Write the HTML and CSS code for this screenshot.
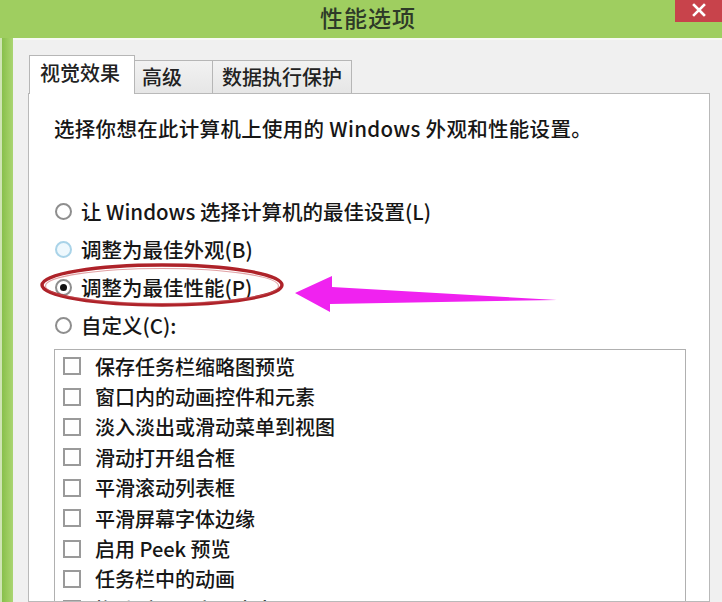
FILE: index.html
```html
<!DOCTYPE html>
<html lang="zh-CN">
<head>
<meta charset="utf-8">
<title>性能选项</title>
<link rel="stylesheet" href="styles.css">
</head>
<body>
<div class="window">
  <header class="titlebar">
    <div class="title">性能选项</div>
    <div class="close" aria-label="关闭">
      <svg width="14" height="14" viewBox="0 0 14 14"><path d="M2 2 L12 12 M12 2 L2 12" stroke="#fff" stroke-width="2.6" stroke-linecap="square"/></svg>
    </div>
  </header>
  <div class="frame">
    <div class="edge"></div>
    <div class="client">
      <div class="tabs">
        <div class="tab active">视觉效果</div>
        <div class="tab t2">高级</div>
        <div class="tab t3">数据执行保护</div>
      </div>
      <div class="panel">
        <p class="desc">选择你想在此计算机上使用的 Windows 外观和性能设置。</p>
        <ul class="radios">
          <li><span class="radio"></span>让 Windows 选择计算机的最佳设置(L)</li>
          <li><span class="radio hover"></span>调整为最佳外观(B)</li>
          <li><span class="radio checked"></span>调整为最佳性能(P)</li>
          <li><span class="radio"></span>自定义(C):</li>
        </ul>
        <div class="listbox">
          <div class="item"><span class="check"></span>保存任务栏缩略图预览</div>
          <div class="item"><span class="check"></span>窗口内的动画控件和元素</div>
          <div class="item"><span class="check"></span>淡入淡出或滑动菜单到视图</div>
          <div class="item"><span class="check"></span>滑动打开组合框</div>
          <div class="item"><span class="check"></span>平滑滚动列表框</div>
          <div class="item"><span class="check"></span>平滑屏幕字体边缘</div>
          <div class="item"><span class="check"></span>启用 Peek 预览</div>
          <div class="item"><span class="check"></span>任务栏中的动画</div>
          <div class="item"><span class="check"></span>拖动时显示窗口内容</div>
        </div>
      </div>
    </div>
  </div>
  <svg class="annot" width="722" height="602" viewBox="0 0 722 602">
    <ellipse cx="162" cy="285" rx="120" ry="20" fill="none" stroke="#ae2229" stroke-width="3.4"/>
    <ellipse cx="162" cy="286" rx="116.5" ry="17.5" fill="none" stroke="#c8545a" stroke-width="1.2" opacity="0.55"/>
    <polygon points="295,293 332,276 332,287 557,300 330,304 330,312" fill="#f022f0"/>
  </svg>
</div>
</body>
</html>
```
FILE: styles.css
```css
* { box-sizing: border-box; }
html, body { margin: 0; padding: 0; }
body {
  width: 722px;
  height: 602px;
  overflow: hidden;
  font-family: "Noto Sans CJK SC", "Noto Sans", sans-serif;
  font-weight: 500;
  color: #161616;
  background: #9fce60;
}
.window {
  position: relative;
  width: 722px;
  height: 602px;
  overflow: hidden;
  display: flex;
  flex-direction: column;
  background: #9fce60;
}
.titlebar {
  height: 38px;
  flex: none;
  display: grid;
  grid-template-columns: 1fr auto 1fr;
  background: #9fce60;
}
.title {
  grid-column: 2;
  font-size: 23px;
  line-height: 34px;
  letter-spacing: 1px;
  color: #2e3a28;
  padding-left: 14px;
}
.close {
  grid-column: 3;
  justify-self: end;
  align-self: start;
  width: 47px;
  height: 22px;
  background: #c8434b;
  display: flex;
  align-items: center;
  justify-content: center;
  padding-bottom: 3px;
}
.frame {
  flex: 1;
  display: flex;
  min-height: 0;
}
.edge {
  width: 13px;
  flex: none;
  background: linear-gradient(to right, #cfe4b4 0, #cfe4b4 2px, #88bf4c 2px, #9ccc5f 8px, #aad573 13px);
}
.client {
  flex: 1;
  display: flex;
  flex-direction: column;
  background: #f0f0f0;
  border-top: 2px solid #f7f9f4;
  padding: 15px 12px 0 15px;
  min-height: 0;
}
.tabs {
  display: flex;
  align-items: flex-end;
  padding-left: 1px;
  flex: none;
}
.tab {
  font-size: 20px;
  color: #222;
  border: 1px solid #b6b6b6;
  border-bottom: none;
  background: linear-gradient(#f2f2f2, #e6e6e6);
  height: 33px;
  line-height: 32px;
  white-space: nowrap;
}
.tab.active {
  position: relative;
  z-index: 2;
  height: 39px;
  margin-bottom: -1px;
  background: #fff;
  width: 106px;
  padding-left: 10px;
  line-height: 34px;
}
.tab.t2 {
  width: 79px;
  margin-left: -1px;
  padding-left: 7px;
}
.tab.t3 {
  width: 140px;
  margin-left: -1px;
  padding-left: 9px;
}
.panel {
  flex: 1;
  background: #fff;
  border: 1px solid #b9b9b9;
  padding: 0 23px 0 25px;
  display: flex;
  flex-direction: column;
  min-height: 0;
}
.desc {
  margin: 20px 0 0 0;
  font-size: 20.5px;
  line-height: 28px;
  letter-spacing: 0.3px;
  white-space: nowrap;
}
.radios {
  list-style: none;
  margin: 50px 0 0 0;
  padding: 0;
}
.radios li {
  height: 38px;
  display: flex;
  align-items: center;
  font-size: 20.5px;
  white-space: nowrap;
}
.radio {
  width: 17px;
  height: 17px;
  border: 2px solid #8e8e8e;
  border-radius: 50%;
  margin: 0 9px 0 1px;
  flex: none;
  display: flex;
  align-items: center;
  justify-content: center;
  background: #fff;
}
.radio.hover {
  border-color: #a9d3e8;
  background: #eef8fd;
}
.radio.checked::after {
  content: "";
  width: 7px;
  height: 7px;
  border-radius: 50%;
  background: #111;
}
.listbox {
  margin-top: 5px;
  border: 1px solid #b0b0b0;
  border-bottom: none;
  padding: 1px 0 0 8px;
  flex: 1;
  min-height: 0;
  overflow: hidden;
}
.item {
  height: 30.4px;
  display: flex;
  align-items: center;
  font-size: 20px;
  white-space: nowrap;
}
.check {
  width: 18px;
  height: 18px;
  border: 2px solid #9a9a9a;
  margin-right: 14px;
  flex: none;
  background: #fff;
}
.annot {
  position: absolute;
  left: 0;
  top: 0;
  pointer-events: none;
}
```
